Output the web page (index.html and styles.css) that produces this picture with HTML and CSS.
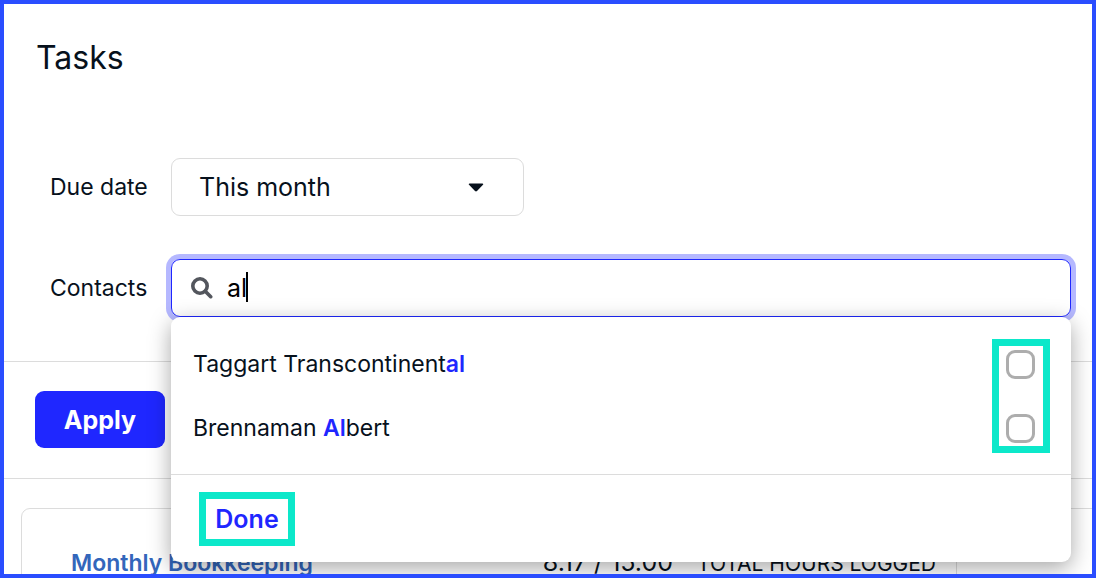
FILE: index.html
```html
<!DOCTYPE html>
<html lang="en">
<head>
    <meta charset="UTF-8">
    <meta name="viewport" content="width=device-width, initial-scale=1.0">
    <title>Tasks</title>
    <link rel="stylesheet" href="styles.css">
</head>
<body>

    <div class="page">
        <h1>Tasks</h1>

        <!-- Filters -->
        <form class="filters">
            <div class="field">
                <label for="due-date">Due date</label>
                <div class="select-wrap">
                    <select id="due-date">
                        <option>This month</option>
                        <option>Next month</option>
                    </select>
                    <svg class="arrow" viewBox="0 0 16 9"><path d="M1.5 0.5h13c.7 0 1 .8.5 1.300L9 8a1.500 1.500 0 0 1-2 0L1 1.800C.5 1.300.8.5 1.500.5z"/></svg>
                </div>
            </div>

            <div class="field">
                <label for="contacts">Contacts</label>
                <div class="search">
                    <svg class="search-icon" viewBox="0 0 22 22"><circle cx="9" cy="9" r="7.200"/><path d="M14.500 14.500l5.200 5.200"/></svg>
                    <input type="text" id="contacts" value="al" autocomplete="off">
                    <span class="caret"></span>

                    <!-- Search results -->
                    <div class="menu">
                        <div class="results">
                            <div class="result">
                                <label for="contact-1">Taggart Transcontinent<b>al</b></label>
                                <input type="checkbox" id="contact-1">
                            </div>
                            <div class="result">
                                <label for="contact-2">Brennaman <b>Al</b>bert</label>
                                <input type="checkbox" id="contact-2">
                            </div>
                            <div class="highlight"></div>
                        </div>
                        <div class="menu-footer">
                            <button type="button" class="done">Done</button>
                        </div>
                    </div>
                </div>
            </div>
        </form>

        <div class="actions">
            <button type="button" class="apply">Apply</button>
        </div>

        <!-- Task list -->
        <div class="card">
            <div class="card-main">
                <a href="#">Monthly Bookkeeping</a>
                <div class="hours">
                    <span class="count">8.17 / 15.00</span>
                    <span>TOTAL HOURS LOGGED</span>
                </div>
            </div>
            <div class="card-side"></div>
        </div>
    </div>

</body>
</html>
```
FILE: styles.css
```css
* {
    box-sizing: border-box;
}
body {
    font-family: Inter, sans-serif;
    font-size: 23px;
    line-height: 32px;
    color: #07111c;
    background-color: #fff;
    margin: 0;
}
.page {
    height: 100vh;
    border: 4px solid #2a4dff;
    overflow: hidden;
}
h1 {
    font-size: 32px;
    font-weight: 400;
    line-height: 40px;
    margin: 0;
    padding: 34px 32px 80px;
}
select,
input,
button {
    font-family: inherit;
    color: inherit;
}
.filters {
    display: flex;
    flex-direction: column;
    gap: 43px;
    padding: 0 21px 44px 46px;
    border-bottom: 1px solid #dcdcdc;
}
.field {
    display: grid;
    grid-template-columns: 121px 1fr;
    align-items: center;
}
.select-wrap {
    position: relative;
    width: 39%;
    min-width: 353px;
}
.select-wrap select {
    display: block;
    width: 100%;
    height: 58px;
    padding: 0 27px;
    font-size: 25px;
    background-color: #fff;
    border: 1px solid #dcdcdc;
    border-radius: 9px;
    appearance: none;
}
.arrow {
    position: absolute;
    top: 25px;
    right: 40px;
    width: 16px;
    height: 9px;
    fill: #07111c;
    pointer-events: none;
}
.search {
    position: relative;
    display: flex;
    align-items: center;
    gap: 14px;
    height: 58px;
    padding: 0 19px;
    border: 1px solid #1f27ff;
    border-radius: 9px;
    box-shadow: 0 0 0 5px #b5b8ff;
}
.search-icon {
    width: 22px;
    height: 22px;
    fill: none;
    stroke: #53565d;
    stroke-width: 3.6;
    stroke-linecap: round;
}
.search input[type="text"] {
    flex: 1;
    min-width: 0;
    padding: 0;
    font-size: 25px;
    color: #000;
    border: none;
    outline: none;
    background: none;
}
.caret {
    position: absolute;
    top: 12px;
    left: 74px;
    width: 2px;
    height: 30px;
    background-color: #000;
}
.menu {
    position: absolute;
    top: 57px;
    left: -1px;
    right: -1px;
    z-index: 1;
    background-color: #fff;
    border-radius: 9px;
    box-shadow: 0 6px 22px rgba(0, 0, 0, 0.35);
}
.results {
    position: relative;
    padding: 15px 36px 14px 22px;
    border-bottom: 1px solid #dcdcdc;
}
.result {
    display: flex;
    align-items: center;
    justify-content: space-between;
    height: 64px;
}
.result b {
    font-weight: 600;
    color: #1f27ff;
}
.result input {
    width: 29px;
    height: 29px;
    margin: 0;
    border: 3px solid #adadad;
    border-radius: 9px;
    appearance: none;
}
.highlight {
    position: absolute;
    top: 22px;
    right: 21px;
    bottom: 21px;
    width: 58px;
    border: 7px solid #0ce8ca;
    pointer-events: none;
}
.menu-footer {
    padding: 17px 28px 16px;
}
.done {
    display: block;
    min-width: 96px;
    padding: 4px 8px;
    font-size: 25px;
    font-weight: 600;
    line-height: 32px;
    color: #1f27ff;
    background-color: #fff;
    border: 7px solid #0ce8ca;
}
.actions {
    padding: 29px 31px 30px;
    border-bottom: 1px solid #dcdcdc;
}
.apply {
    display: block;
    min-width: 130px;
    padding: 13px 28px 12px;
    font-size: 25px;
    font-weight: 700;
    line-height: 32px;
    color: #fff;
    background-color: #1f27ff;
    border: none;
    border-radius: 9px;
}
.card {
    display: flex;
    margin: 29px -20px 0 17px;
    border: 1px solid #dcdcdc;
    border-radius: 9px;
}
.card-main {
    flex: 1;
    display: flex;
    justify-content: space-between;
    align-items: baseline;
    padding: 37px 20px 37px 49px;
    border-right: 1px solid #dcdcdc;
}
.card-main a {
    font-weight: 600;
    color: #3366bb;
    text-decoration: none;
}
.hours {
    display: flex;
    align-items: baseline;
    gap: 24px;
    font-size: 21px;
}
.count {
    font-size: 25px;
}
.card-side {
    width: 154px;
}
```
